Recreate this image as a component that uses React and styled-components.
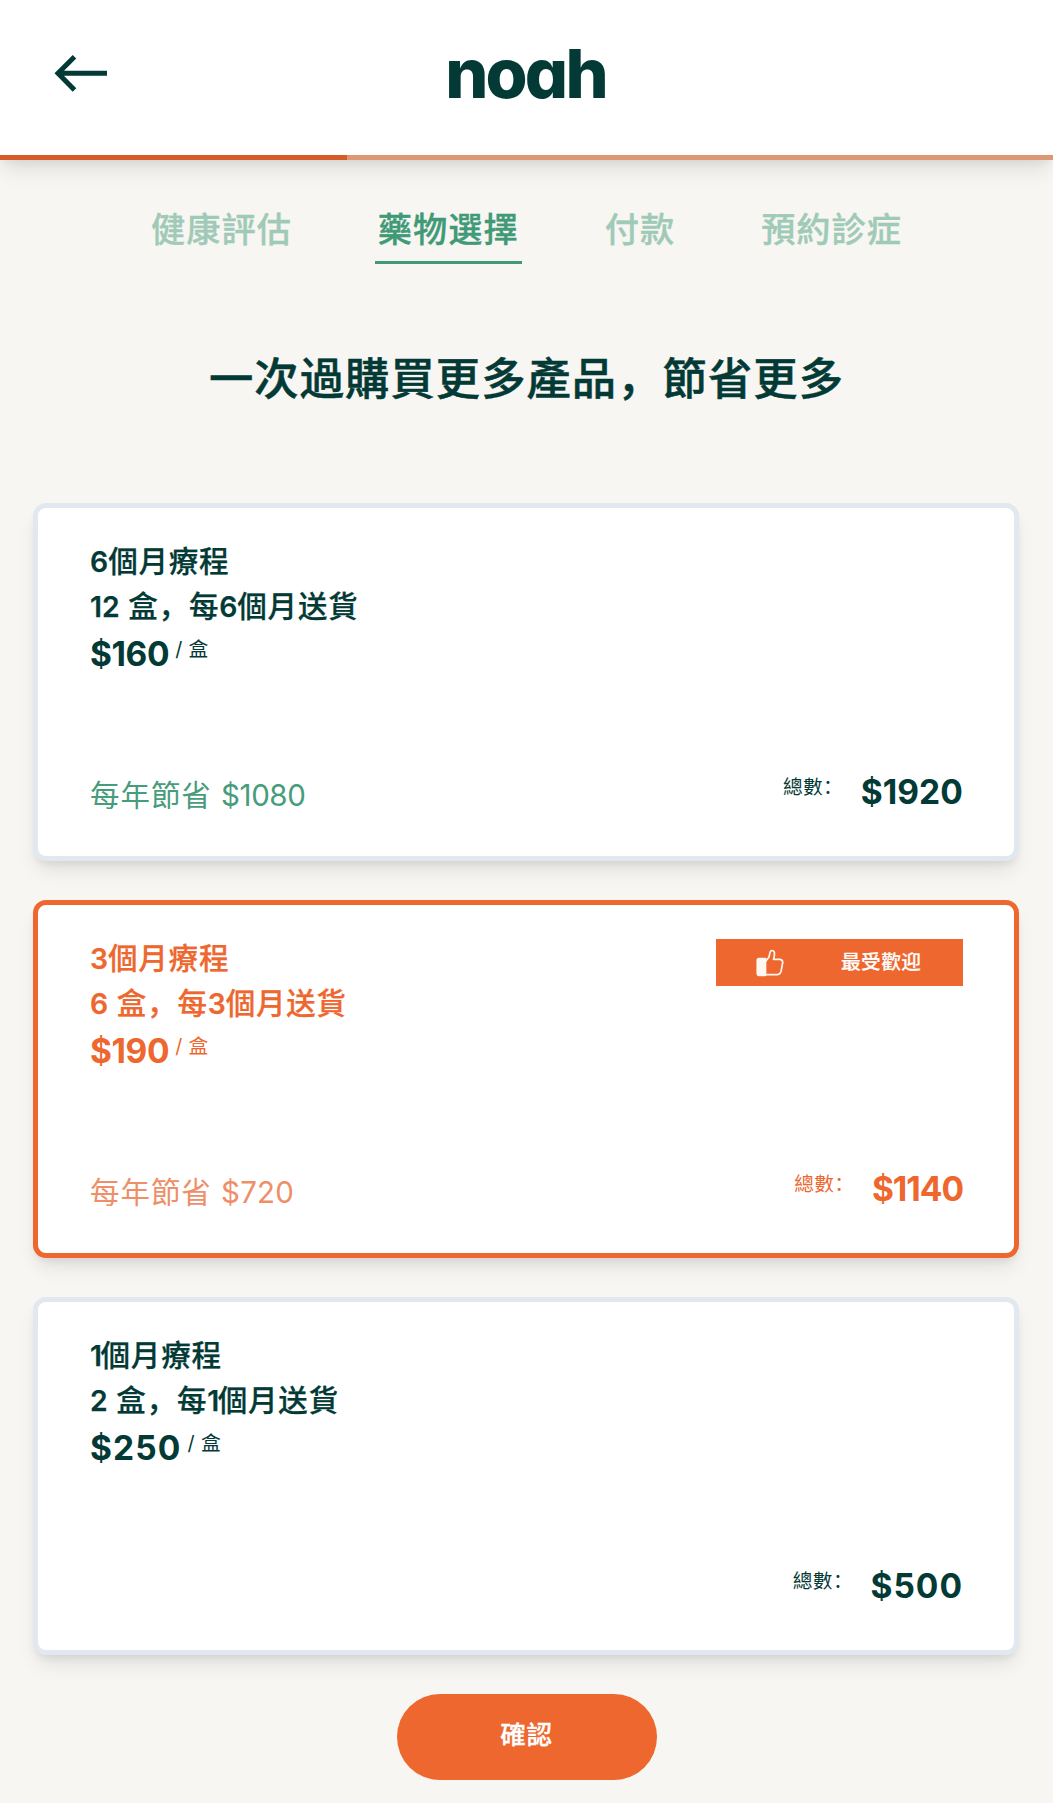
import React from "react";
import styled, { createGlobalStyle } from "styled-components";

const GlobalStyle = createGlobalStyle`
  * { box-sizing: border-box; }
  body {
    margin: 0;
    background: #f8f6f2;
    color: #033a36;
    font-family: Inter, "Noto Sans CJK SC", sans-serif;
    letter-spacing: 0.025em;
  }
`;

const Page = styled.div`
  min-height: 1803px;
  display: flex;
  flex-direction: column;
`;

const TopBar = styled.div`
  box-shadow: 0 13px 20px -4px rgba(0, 0, 0, 0.1), 0 5px 8px -3px rgba(0, 0, 0, 0.06);
`;

const Header = styled.header`
  height: 155px;
  display: grid;
  grid-template-columns: 1fr auto 1fr;
  background: #fff;
`;

const BackButton = styled.button`
  justify-self: start;
  margin: 55px 0 0 54px;
  padding: 0;
  width: 54px;
  height: 37px;
  border: 0;
  background: none;
  svg { display: block; }
`;

const Logo = styled.div`
  padding: 31px 2px 0 0;
  height: 110px;
  font-size: 68px;
  line-height: 84px;
  font-weight: 800;
  letter-spacing: -2.8px;
  font-feature-settings: "cv11" 1;
`;

const Progress = styled.div`
  height: 5px;
  background: #dd9772;
`;

const ProgressFill = styled.div`
  width: 33%;
  height: 100%;
  background: #d65b28;
`;

const Steps = styled.nav`
  display: flex;
  justify-content: center;
  gap: 80px;
  height: 104px;
  padding-top: 44px;
`;

const Step = styled.div`
  height: 60px;
  padding: 1px 3px 0;
  font-size: 34.2px;
  line-height: 50px;
  font-weight: 500;
  -webkit-text-stroke: 0.35px currentColor;
  letter-spacing: 0.03em;
  color: ${(p) => (p.$active ? "#419a77" : "#9fcab7")};
  border-bottom: ${(p) => (p.$active ? "3px solid #419a77" : "0")};
`;

const Title = styled.h1`
  margin: 82px 0 0;
  height: 67px;
  font-size: 44.3px;
  line-height: 66px;
  font-weight: 500;
  -webkit-text-stroke: 0.5px currentColor;
  letter-spacing: 0.024em;
  text-align: center;
`;

const Plans = styled.main`
  display: flex;
  flex-direction: column;
  gap: 39.5px;
  margin: 90px 34px 0 33px;
`;

const Card = styled.section`
  height: 357.5px;
  padding: 31px 51px 33px 52px;
  display: flex;
  flex-direction: column;
  justify-content: space-between;
  border: 5px solid ${(p) => (p.$selected ? "#ed672f" : "#e2e8f0")};
  border-radius: 13px;
  background: #fff;
  color: ${(p) => (p.$selected ? "#ed672f" : "#033a36")};
  box-shadow: 0 13px 20px -4px rgba(0, 0, 0, 0.09), 0 5px 8px -3px rgba(0, 0, 0, 0.09);
`;

const CardRow = styled.div`
  display: flex;
  justify-content: space-between;
  align-items: flex-start;
`;

const PlanLine = styled.div`
  font-size: 29.5px;
  line-height: 44px;
  font-weight: 500;
  -webkit-text-stroke: 0.25px currentColor;
  letter-spacing: 0.027em;
  white-space: pre;
`;

const Num = styled.span`
  font-weight: 600;
  font-size: 0.96em;
  letter-spacing: ${(p) => (p.$narrow ? -1.4 : 0)}px;
`;

const PriceRow = styled.div`
  display: flex;
  align-items: flex-start;
  height: 50px;
`;

const Amount = styled.span`
  font-size: 33.5px;
  line-height: 50px;
  font-weight: 700;
  letter-spacing: ${(p) => p.$tracking || 0}px;
`;

const Unit = styled.span`
  margin-left: 6px;
  font-size: 19.7px;
  line-height: 40px;
`;

const Savings = styled.div`
  padding-top: 6px;
  font-size: 29.5px;
  line-height: 44px;
  letter-spacing: 0.032em;
  color: ${(p) => (p.$selected ? "#ee8f69" : "#479c7b")};
`;

const SavedAmount = styled.span`
  letter-spacing: ${(p) => p.$tracking || 0}px;
`;

const Total = styled.div`
  margin-left: auto;
  display: flex;
  align-items: flex-start;
  height: 56px;
`;

const TotalLabel = styled.span`
  margin-right: 17.5px;
  font-size: 19.7px;
  line-height: 40px;
`;

const Badge = styled.div`
  width: 247px;
  height: 47px;
  margin-top: 3px;
  display: flex;
  align-items: center;
  padding: 0 0 4px 40px;
  background: #ed672f;
  color: #fff;
  font-size: 19.7px;
  font-weight: 500;
  -webkit-text-stroke: 0.2px currentColor;
  svg { margin: 4px 57px 0 0; }
`;

const Confirm = styled.button`
  align-self: center;
  margin-top: 39px;
  width: 260px;
  height: 86px;
  padding: 0 0 9px;
  border: 0;
  border-radius: 43px;
  background: #ed672f;
  color: #fff;
  font: 500 25.5px Inter, "Noto Sans CJK SC", sans-serif;
  -webkit-text-stroke: 0.3px currentColor;
  letter-spacing: 0.025em;
`;

const ArrowIcon = () => (
  <svg width="54" height="37" viewBox="0 0 54 37" fill="none" stroke="#033a36" strokeWidth="5">
    <path d="M53 18.3H5M20.5 1.8L4 18.3L20.5 35" />
  </svg>
);

const ThumbIcon = () => (
  <svg width="28" height="28" viewBox="0 0 28 28" fill="none" stroke="#fff8f0" strokeWidth="1.7" strokeLinejoin="round">
    <path d="M3 9.5H9.5V26.3H3Q1.3 26.3 1.3 24.6V11.2Q1.3 9.5 3 9.5Z" fill="#fff8f0" />
    <path d="M9.5 12.5L12.7 8.5Q13.5 7.2 13.8 4.2Q14.3 1.3 16.3 1.5Q18.8 1.9 18.5 5.3Q18.3 7.7 17.5 10.3H24Q26.8 10.6 26.7 13.5L25 22.5Q24.1 25.4 21.5 25.6H9.5" />
  </svg>
);

const steps = ["健康評估", "藥物選擇", "付款", "預約診症"];

const plans = [
  { months: 6, boxes: 12, price: 160, priceTracking: -0.4, savings: 1080, savingsTracking: -0.4, total: 1920, totalTracking: 0.1 },
  { months: 3, boxes: 6, price: 190, priceTracking: -0.4, savings: 720, savingsTracking: 0.2, total: 1140, totalTracking: -1 },
  { months: 1, boxes: 2, price: 250, priceTracking: 1.1, total: 500, totalTracking: 1 },
];

function PlanCard({ plan, selected }) {
  const narrow = plan.months === 1;
  return (
    <Card $selected={selected}>
      <CardRow>
        <div>
          <PlanLine><Num $narrow={narrow}>{plan.months}</Num>個月療程</PlanLine>
          <PlanLine><Num>{plan.boxes}</Num> 盒，每<Num $narrow={narrow}>{plan.months}</Num>個月送貨</PlanLine>
          <PriceRow>
            <Amount $tracking={plan.priceTracking}>${plan.price}</Amount>
            <Unit>/ 盒</Unit>
          </PriceRow>
        </div>
        {selected && <Badge><ThumbIcon />最受歡迎</Badge>}
      </CardRow>
      <CardRow>
        {plan.savings && (
          <Savings $selected={selected}>
            每年節省 <SavedAmount $tracking={plan.savingsTracking}>${plan.savings}</SavedAmount>
          </Savings>
        )}
        <Total>
          <TotalLabel>總數：</TotalLabel>
          <Amount $tracking={plan.totalTracking}>${plan.total}</Amount>
        </Total>
      </CardRow>
    </Card>
  );
}

export default function App() {
  return (
    <Page>
      <GlobalStyle />
      <TopBar>
        <Header>
          <BackButton aria-label="返回"><ArrowIcon /></BackButton>
          <Logo>noah</Logo>
        </Header>
        <Progress><ProgressFill /></Progress>
      </TopBar>
      <Steps>
        {steps.map((s, i) => <Step key={s} $active={i === 1}>{s}</Step>)}
      </Steps>
      <Title>一次過購買更多產品，節省更多</Title>
      <Plans>
        {plans.map((p) => <PlanCard key={p.months} plan={p} selected={p.months === 3} />)}
      </Plans>
      <Confirm>確認</Confirm>
    </Page>
  );
}
